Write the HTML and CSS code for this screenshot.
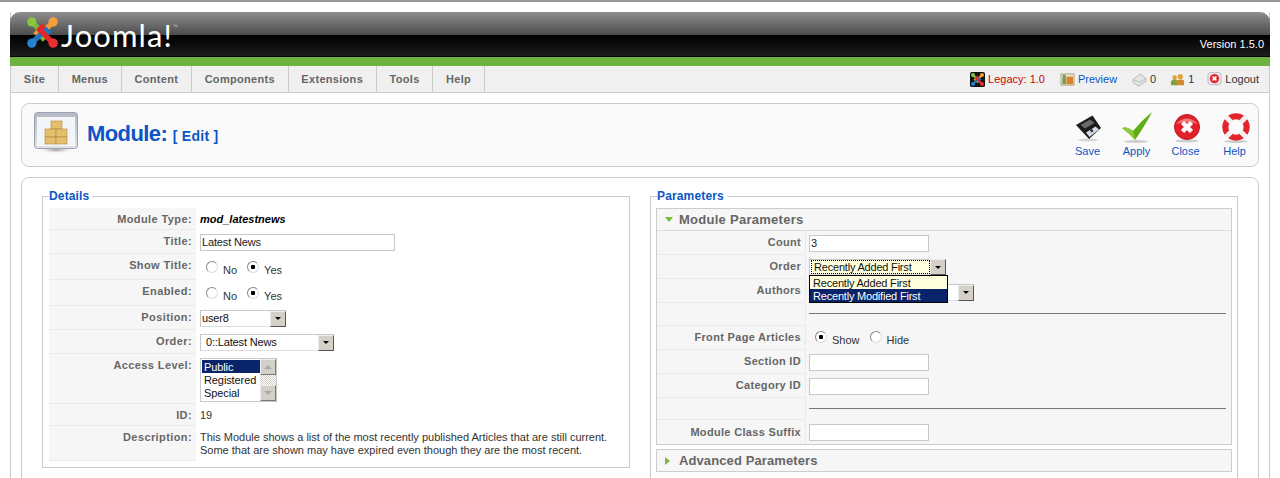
FILE: index.html
```html
<!DOCTYPE html>
<html lang="en">
<head>
<meta charset="utf-8">
<title>Module: Edit</title>
<link rel="stylesheet" href="styles.css">
</head>
<body>
<svg class="defs" width="0" height="0" aria-hidden="true">
  <symbol id="jsym" viewBox="0 0 32 32">
    <g fill="none" stroke-width="5.600" stroke-linecap="butt" stroke-linejoin="round">
      <path d="M5 5 L19 19 L14.500 23.500" stroke="#7ab93a"/>
      <path d="M27 5 L13 19 L8.500 14.500" stroke="#f19a38"/>
      <path d="M5 27 L19 13 L23.500 17.500" stroke="#1f75bd"/>
      <path d="M27 27 L13 13 L17.500 8.500" stroke="#e3262c"/>
    </g>
    <circle cx="5" cy="5" r="4.800" fill="#8cc640"/>
    <circle cx="27" cy="5" r="4.800" fill="#f5a03c"/>
    <circle cx="5" cy="27" r="4.800" fill="#2583cf"/>
    <circle cx="27" cy="27" r="4.800" fill="#ec2f33"/>
  </symbol>
</svg>
<div class="page">
  <header class="masthead">
    <div class="brand">
      <svg class="logo" viewBox="0 0 32 32"><use href="#jsym"/></svg>
      <span class="wordmark">Joomla!</span><span class="tm">™</span>
    </div>
    <span class="version">Version 1.5.0</span>
  </header>
  <nav class="menubar">
    <ul class="menu">
      <li>Site</li><li>Menus</li><li>Content</li><li>Components</li><li>Extensions</li><li>Tools</li><li>Help</li>
    </ul>
    <div class="status">
      <span class="stat">
        <svg class="mini" viewBox="0 0 16 16"><rect width="16" height="16" rx="2" fill="#111"/><use href="#jsym" x="1" y="1" width="14" height="14"/></svg>
        <span class="red">Legacy: 1.0</span>
      </span>
      <span class="stat">
        <svg class="mini" viewBox="0 0 16 16"><rect x="1" y="2" width="14" height="12" fill="#e8e2c8" stroke="#a9a58e"/><rect x="2.500" y="6" width="4" height="7" fill="#7f9a5a"/><rect x="7" y="5" width="7" height="8" fill="#d9822b"/><rect x="3" y="3" width="3" height="3" fill="#6d8f4a"/></svg>
        <span class="blue">Preview</span>
      </span>
      <span class="stat">
        <svg class="mini" viewBox="0 0 16 16"><path d="M1 8 L9 2 L15 7 L15 10 L7 15 L1 11Z" fill="#e4e4e4" stroke="#b5b5b5"/><path d="M1 8 L8 11 L15 7" fill="none" stroke="#bdbdbd"/></svg>
        <span>0</span>
      </span>
      <span class="stat users">
        <svg class="mini" viewBox="0 0 16 16"><circle cx="5" cy="6" r="2.500" fill="#d9a441"/><path d="M1 14 V11 Q1 8 5 8 Q8 8 8 11 V14Z" fill="#7fa23c"/><circle cx="11" cy="5" r="2.800" fill="#e0a23a"/><path d="M7 14 V10 Q7 8 11 8 Q15 8 15 10 V14Z" fill="#cf8a2c"/></svg>
        <span>1</span>
      </span>
      <span class="stat last">
        <svg class="mini" viewBox="0 0 16 16"><rect x="1" y="0.500" width="14" height="13" rx="3" fill="#e9e9ee" stroke="#b9b9c4"/><circle cx="8" cy="7" r="5" fill="#dc2b30"/><path d="M6 5 L10 9 M10 5 L6 9" stroke="#fff" stroke-width="1.700"/></svg>
        <span>Logout</span>
      </span>
    </div>
  </nav>
  <main class="inner">
    <section class="toolbar-box">
      <div class="title">
        <svg class="title-icon" viewBox="0 0 44 42">
          <defs>
            <linearGradient id="win" x1="0" y1="0" x2="0" y2="1"><stop offset="0" stop-color="#b4bac6"/><stop offset="1" stop-color="#dfe2e9"/></linearGradient>
            <radialGradient id="shade"><stop offset="0" stop-color="#999"/><stop offset="1" stop-color="#fff" stop-opacity="0"/></radialGradient>
          </defs>
          <ellipse cx="22" cy="38" rx="20" ry="3.500" fill="url(#shade)"/>
          <rect x="0.500" y="0.500" width="43" height="36" rx="3" fill="url(#win)" stroke="#9aa0ad"/>
          <rect x="3" y="5" width="38" height="29" fill="#f4f5f8"/>
          <g fill="#e3bf6e" stroke="#b08b3c" stroke-width=".6">
            <rect x="17" y="9" width="11" height="8"/>
            <rect x="11" y="17" width="11" height="8"/>
            <rect x="22" y="17" width="11" height="8"/>
            <rect x="11" y="25" width="11" height="7"/>
            <rect x="22" y="25" width="11" height="7"/>
          </g>
        </svg>
        <h1>Module: <small>[ Edit ]</small></h1>
      </div>
      <div class="tools">
        <a class="tool">
          <svg class="tool-icon" viewBox="0 0 32 32"><ellipse cx="16" cy="28" rx="10" ry="1.500" fill="#d4d4d4"/><path d="M4 13 L20.500 3.500 L29 16 L17 27Z" fill="#1c1c1c"/><path d="M8.500 13 L18 7.500 L22.500 11 L13 16.500Z" fill="#6b6b6b"/><path d="M14 20.500 L23.500 14.500 L27 17.500 L17.500 25Z" fill="#d5dae6"/><rect x="18.500" y="17.500" width="2.500" height="3" fill="#30343c" transform="rotate(-32 19 19)"/></svg>
          <span>Save</span>
        </a>
        <a class="tool">
          <svg class="tool-icon" viewBox="0 0 32 32"><ellipse cx="15" cy="29.500" rx="12" ry="1.500" fill="#ccc"/><path d="M1 16 Q6 14 12 19 Q20 9 31 0 Q25 12 14 28 Q8 21 1 16Z" fill="#5fae14"/><path d="M1 16 Q6 14 12 19 L14 28 Q8 21 1 16Z" fill="#8ccb3e"/></svg>
          <span>Apply</span>
        </a>
        <a class="tool">
          <svg class="tool-icon" viewBox="0 0 32 32"><ellipse cx="17" cy="29" rx="12" ry="1.500" fill="#ccc"/><circle cx="17" cy="15" r="12.500" fill="#e2202a" stroke="#b91a20"/><path d="M6 12 Q17 1 28 12 Q17 8 6 12Z" fill="#f47a7e"/><path d="M12.500 10.500 L21.500 19.500 M21.500 10.500 L12.500 19.500" stroke="#fff" stroke-width="4.500"/></svg>
          <span>Close</span>
        </a>
        <a class="tool">
          <svg class="tool-icon" viewBox="0 0 32 32"><ellipse cx="17" cy="29.500" rx="12" ry="1.500" fill="#ccc"/><g transform="translate(1 0)"><circle cx="16" cy="15" r="10.500" fill="none" stroke="#f0eeee" stroke-width="6"/><g fill="none" stroke="#e3242b" stroke-width="6"><path d="M8.500 7.500 A10.500 10.500 0 0 1 23.500 7.500"/><path d="M8.500 22.500 A10.500 10.500 0 0 0 23.500 22.500"/><path d="M8 8 A10.500 10.500 0 0 0 8 22"/><path d="M24 8 A10.500 10.500 0 0 1 24 22"/></g><g stroke="#f3f0f0" stroke-width="5"><path d="M6 5 L11 10 M26 5 L21 10 M6 25 L11 20 M26 25 L21 20"/></g></g></svg>
          <span>Help</span>
        </a>
      </div>
    </section>
    <section class="content-box">
      <fieldset class="group">
        <legend>Details</legend>
        <div class="row h22"><div class="key">Module Type:</div><div class="val"><strong class="modname">mod_latestnews</strong></div></div>
        <div class="row h24"><div class="key">Title:</div><div class="val"><input class="text t-title" type="text" value="Latest News"></div></div>
        <div class="row h26"><div class="key">Show Title:</div><div class="val radios"><input type="radio" name="st"><label>No</label><input type="radio" name="st" checked><label>Yes</label></div></div>
        <div class="row h26"><div class="key">Enabled:</div><div class="val radios"><input type="radio" name="en"><label>No</label><input type="radio" name="en" checked><label>Yes</label></div></div>
        <div class="row h24"><div class="key">Position:</div><div class="val"><div class="select s-pos"><span>user8</span><i class="arrow"></i></div></div></div>
        <div class="row h24"><div class="key">Order:</div><div class="val"><div class="select s-order"><span>0::Latest News</span><i class="arrow"></i></div></div></div>
        <div class="row h50"><div class="key">Access Level:</div><div class="val">
          <div class="listbox">
            <ul><li class="sel">Public</li><li>Registered</li><li>Special</li></ul>
            <div class="scroll"><i class="btn up"></i><i class="track"></i><i class="btn down"></i></div>
          </div>
        </div></div>
        <div class="row h22"><div class="key">ID:</div><div class="val plain">19</div></div>
        <div class="row h35"><div class="key">Description:</div><div class="val plain">This Module shows a list of the most recently published Articles that are still current.<br>Some that are shown may have expired even though they are the most recent.</div></div>
      </fieldset>
      <fieldset class="group params">
        <legend>Parameters</legend>
        <div class="panel">
          <h3 class="panel-head"><i class="tri-down"></i>Module Parameters</h3>
          <div class="prow h24"><div class="pkey">Count</div><div class="pval"><input class="text t-short" type="text" value="3"></div></div>
          <div class="prow h24"><div class="pkey">Order</div><div class="pval">
            <div class="select s-porder focus"><span>Recently Added First</span><i class="arrow"></i></div>
            <ul class="dropdown"><li>Recently Added First</li><li class="sel">Recently Modified First</li></ul>
          </div></div>
          <div class="prow h23"><div class="pkey">Authors</div><div class="pval"><div class="select s-auth"><span></span><i class="arrow"></i></div></div></div>
          <div class="prow h23"><div class="pkey"></div><div class="pval"><hr class="rule"></div></div>
          <div class="prow h25"><div class="pkey">Front Page Articles</div><div class="pval radios"><input type="radio" name="fp" checked><label>Show</label><input type="radio" name="fp"><label>Hide</label></div></div>
          <div class="prow h24"><div class="pkey">Section ID</div><div class="pval"><input class="text t-short" type="text"></div></div>
          <div class="prow h24"><div class="pkey">Category ID</div><div class="pval"><input class="text t-short" type="text"></div></div>
          <div class="prow h22"><div class="pkey"></div><div class="pval"><hr class="rule"></div></div>
          <div class="prow h25 end"><div class="pkey">Module Class Suffix</div><div class="pval"><input class="text t-short" type="text"></div></div>
        </div>
        <div class="panel closed">
          <h3 class="panel-head"><i class="tri-right"></i>Advanced Parameters</h3>
        </div>
      </fieldset>
    </section>
  </main>
</div>
</body>
</html>
```

FILE: styles.css
```css
* { box-sizing: border-box; }
html, body { margin: 0; height: 478px; overflow: hidden; background: #fff; }
body { font: 11px/13px "Liberation Sans", Arial, sans-serif; color: #333; border-top: 2px solid #999; }
.defs { position: absolute; }
ul { margin: 0; padding: 0; list-style: none; }

.page { margin: 10px 10px 0; width: 1260px; height: 600px; border-left: 1px solid #ccc; border-right: 1px solid #ccc; }

.masthead {
  margin: 0 -1px; height: 54px; padding: 0 6px 0 17px; display: flex; justify-content: space-between;
  border-radius: 10px 10px 0 0; border-bottom: 9px solid #6db33f;
  box-shadow: inset 0 -1px 0 #000;
  background: linear-gradient(#8e8e8e 0, #4c4c4c 23px, #000 23px, #1d1d1d 45px);
}
.brand { display: flex; align-items: flex-start; padding-top: 5px; }
.logo { width: 31px; height: 31px; }
.wordmark { margin: 3px 0 0 3px; font: 400 31px/30px Lato, "Noto Sans", sans-serif; color: #fff; letter-spacing: 1.100px; }
.tm { font-size: 5px; line-height: 8px; color: #ccc; margin-top: 5px; }
.version { align-self: flex-end; margin-bottom: 6px; color: #fff; font-size: 11px; line-height: 13px; }

.menubar {
  height: 27px; display: flex; justify-content: space-between; background: #f0f0f0; border-bottom: 1px solid #ccc;
}
.menu { display: flex; }
.menu li { padding: 0 12.750px; line-height: 26px; font-weight: 700; color: #666; border-right: 1px solid #ccc; letter-spacing: .3px; }
.status { display: flex; align-items: flex-start; padding: 5px 10px 0 0; }
.stat { display: flex; align-items: center; gap: 3px; margin-left: 15px; height: 16px; color: #333; }
.stat.users { margin-left: 14px; }
.stat.last { margin-left: 13px; }
.mini { width: 15px; height: 15px; }
.red { color: #c00; }
.blue { color: #0b55c4; }

.inner { padding: 10px 10px 0; }
.toolbar-box {
  height: 64px; display: flex; justify-content: space-between; border: 1px solid #ccc; border-radius: 8px; background: #fafafa;
  padding: 8px 0 0 12px;
}
.title { display: flex; align-items: flex-start; }
.title-icon { width: 44px; height: 42px; }
h1 { margin: 7px 0 0 9px; font: 700 22px/30px "Liberation Sans", Arial, sans-serif; color: #0b55c4; letter-spacing: -.6px; }
h1 small { font-size: 14px; letter-spacing: .3px; }
.tools { display: flex; margin-right: -1px; }
.tool { width: 49px; display: flex; flex-direction: column; align-items: center; color: #0b55c4; }
.tool-icon { width: 32px; height: 32px; margin-bottom: 1px; }

.content-box {
  margin-top: 10px; height: 400px; border: 1px solid #ccc; border-radius: 8px 8px 0 0; background: #fff;
  display: grid; grid-template-columns: 588px 588px; column-gap: 20px; align-items: start; padding: 11px 0 0 20px;
}
.group { margin: 0; min-width: 0; padding: 5px 6px 6px; border: 1px solid #ccc; }
.params { height: 320px; padding: 5px 5px 6px; }
.params legend { margin-left: 1px; }
legend { padding: 0 3px 0 0; font-weight: 700; font-size: 12px; line-height: 14px; color: #0b55c4; letter-spacing: .15px; }

.row { display: flex; }
.h22 { height: 22px; } .h23 { height: 23.600px; } .h24 { height: 24px; } .h25 { height: 24px; }
.h26 { height: 26px; } .h35 { height: 35px; } .h50 { height: 50px; }
.key {
  width: 147px; flex: none; text-align: right; padding: 5px 4px 0 0; font-weight: 700; color: #666;
  background: #f6f6f6; border-bottom: 1px solid #e9e9e9; letter-spacing: .4px;
}
.val { padding: 3px 0 0 4px; color: #333; }
.val.plain { padding-top: 5px; }
.modname { display: block; margin-top: 2px; font-style: italic; color: #000; }
.text { display: block; height: 17px; margin: 1px 0 0; padding: 0 1px 2px; border: 1px solid #c8c8c8; background: #fff; font: 11px/13px "Liberation Sans", Arial, sans-serif; color: #222; letter-spacing: -.15px; }
.t-title { width: 195px; }
.t-short { width: 120px; }

.radios { display: flex; align-items: flex-start; padding-left: 10px; }
.radios input { appearance: none; margin: 4px 0 0; width: 12px; height: 12px; border-radius: 50%; border: 1px solid #888; border-right-color: #ddd; border-bottom-color: #ddd; background: #fff; flex: none; }
.radios input:checked { background: radial-gradient(circle, #000 0 2px, #fff 2.500px); }
.radios label { margin: 7px 10px 0 5px; }

.select { display: flex; justify-content: space-between; align-items: center; height: 17px; margin-top: 1px; background: #fff; border: 1px solid #c8c8c8; border-right: 0; border-bottom: 1px solid #ddd; color: #111; padding-left: 1px; letter-spacing: -.15px; }
.select span { white-space: nowrap; }
.s-pos { width: 86px; }
.s-order { width: 134px; padding-left: 5px; }
.s-porder { width: 137px; height: 16px; padding: 0 0 0 1px; margin-top: 1px; letter-spacing: -.2px; }
.s-porder.focus span { padding: 0 3px; background: #ffd; outline: 1px dotted #000; outline-offset: -1px; flex: 1; line-height: 14px; }
.s-auth { width: 165px; height: 17px; margin-top: 2px; }
.arrow { width: 16px; height: 16px; flex: none; display: flex; align-items: center; justify-content: center; background: #d4d0c8; border: 1px solid; border-color: #eee #555 #555 #eee; }
.arrow::after { content: ""; border: 3px solid transparent; border-top: 3px solid #000; border-bottom: 0; }

.listbox { display: flex; width: 77px; height: 44px; border: 1px solid #c8c8c8; background: #fff; margin-top: 1px; }
.listbox ul { flex: 1; padding: 1px 0 0 1px; color: #111; }
.listbox li { height: 13px; line-height: 14px; padding-left: 2px; letter-spacing: -.1px; }
.listbox .sel, .dropdown .sel { background: #0a246a; color: #fff; }
.scroll { width: 16px; display: flex; flex-direction: column; }
.btn { height: 16px; display: flex; align-items: center; justify-content: center; background: #d4d0c8; border: 1px solid; border-color: #eee #777 #777 #eee; }
.up::after { content: ""; border: 4px solid transparent; border-bottom: 4px solid #aaa; border-top: 0; }
.down::after { content: ""; border: 4px solid transparent; border-top: 4px solid #aaa; border-bottom: 0; }
.track { flex: 1; background: repeating-conic-gradient(#d4d0c8 0 25%, #fff 0 50%) 0 0 / 2px 2px; }

.panel { width: 576px; border: 1px solid #ccc; background: #f6f6f6; }
.panel.closed { margin-top: 4px; height: 23px; border-color: #ccc; }
.panel-head { margin: 0; height: 22px; padding-left: 8px; display: flex; align-items: center; font: 700 13px/22px "Liberation Sans", Arial, sans-serif; color: #666; letter-spacing: .27px; border-bottom: 1px solid #dcdcdc; }
.closed .panel-head { border: 0; letter-spacing: .1px; }
.tri-down { width: 0; height: 0; margin-right: 6px; border: 4.500px solid transparent; border-top: 5px solid #7ab93a; border-bottom: 0; }
.tri-right { width: 0; height: 0; margin-right: 9px; border: 4.500px solid transparent; border-left: 5px solid #7ab93a; border-right: 0; }
.prow { display: flex; }
.pkey { width: 149px; flex: none; text-align: right; padding: 5px 4px 0 0; font-weight: 700; color: #666; border-bottom: 1px solid #e9e9e9; border-right: 1px solid #e9e9e9; letter-spacing: .32px; }
.end .pkey { padding-top: 6px; border-bottom: 0; }
.pval { position: relative; flex: 1; padding: 3px 5px 0 3px; }
.pval.radios { padding-left: 9px; padding-top: 1px; }
.rule { margin: 7px 0 0; border: 0; border-top: 1px solid #777; }
.dropdown { position: absolute; left: 3px; top: 20px; z-index: 2; width: 139px; border: 1px solid #000; background: #ffd; color: #111; letter-spacing: -.2px; }
.dropdown li { height: 13px; line-height: 14px; padding-left: 3px; }
```
